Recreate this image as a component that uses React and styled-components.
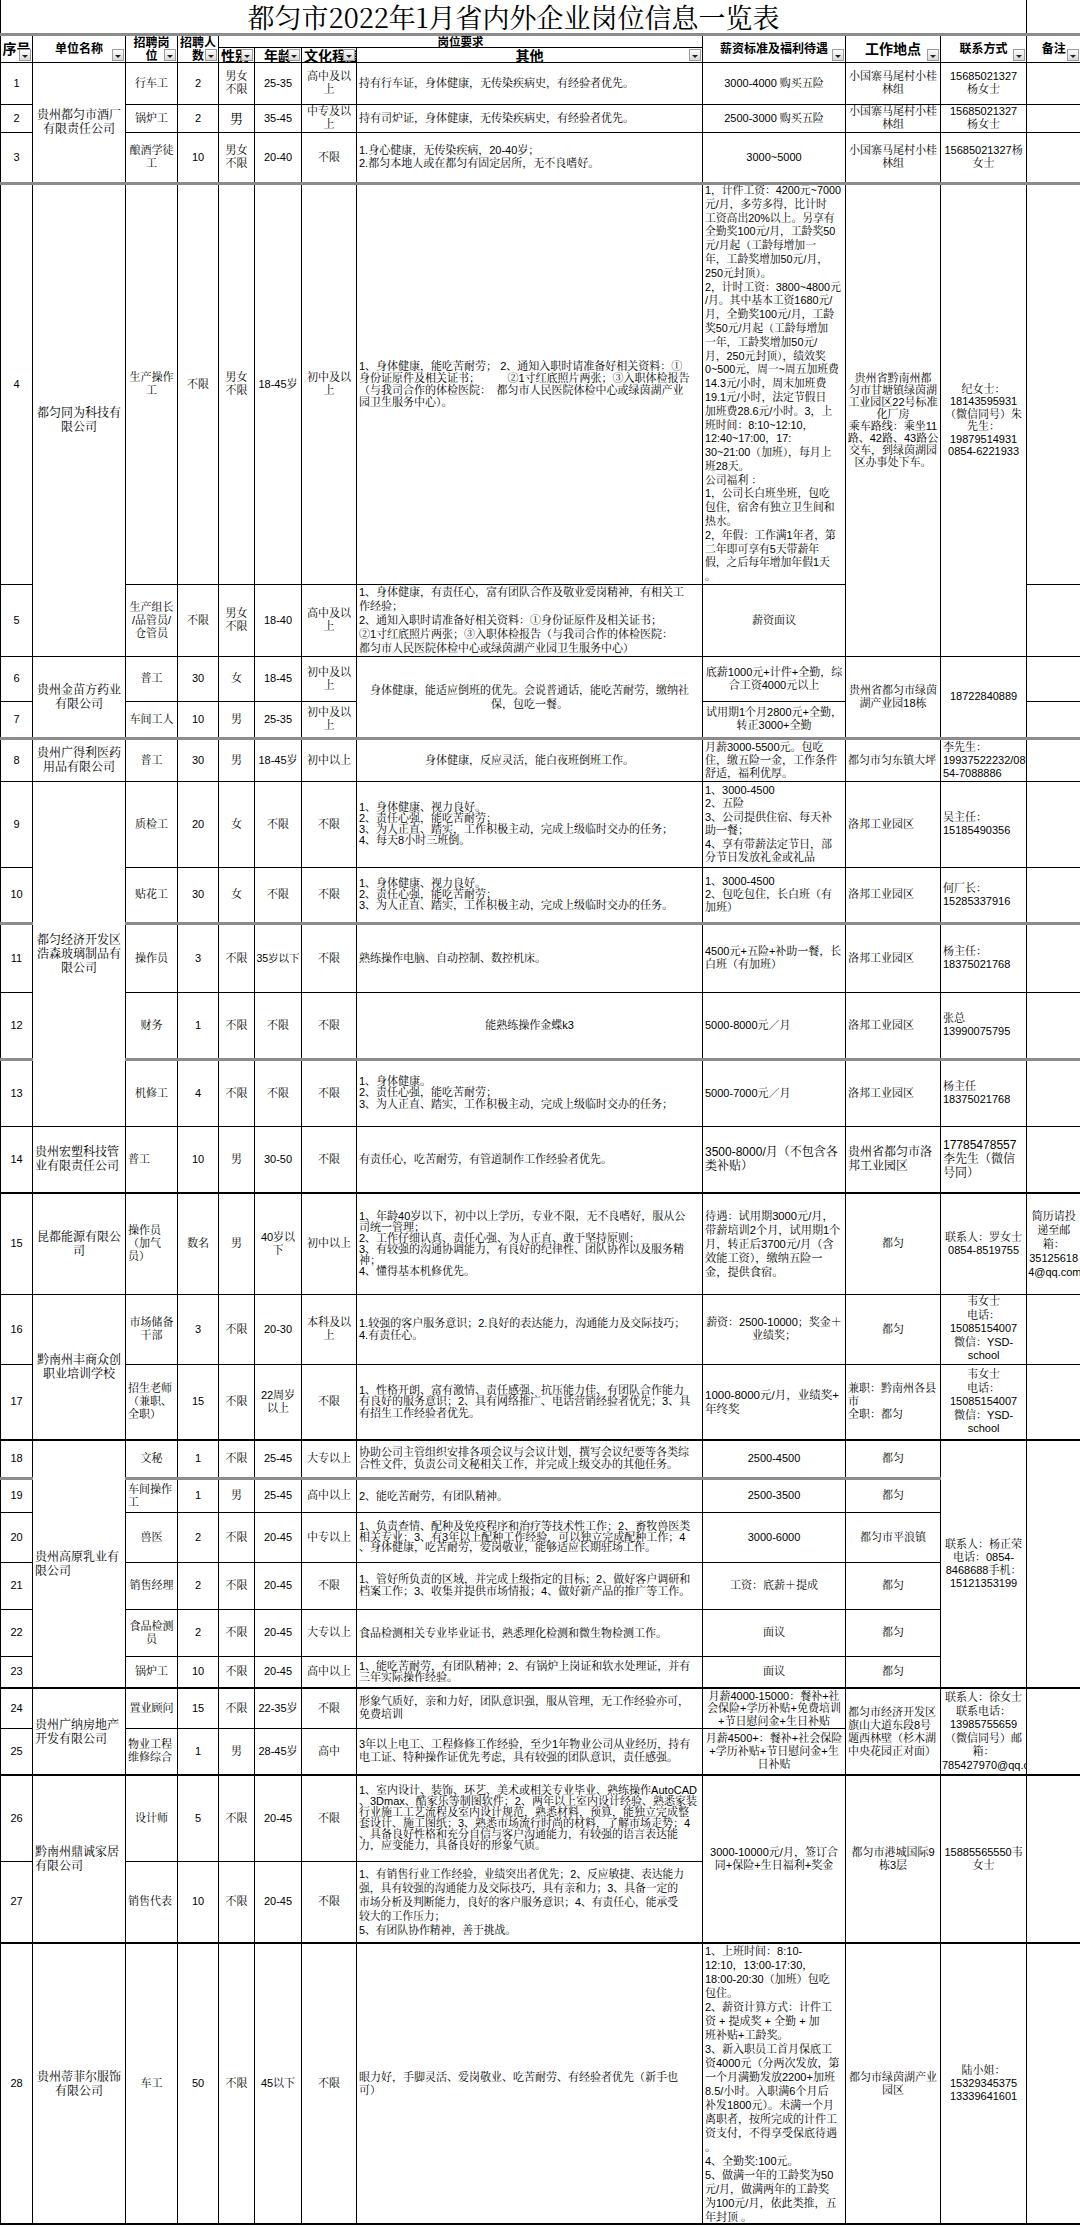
import React from "react";
import styled, { createGlobalStyle } from "styled-components";

const GlobalStyle = createGlobalStyle`
  html, body {
    margin: 0;
    padding: 0;
    background: #fff;
  }
  body {
    font-family: "Liberation Sans", "Noto Serif CJK SC", "Noto Sans CJK SC", sans-serif;
    color: #000;
  }
`;

// column widths, px
const COLS = [32, 93, 52, 41, 36, 47, 55, 346, 143, 95, 86, 54];
const EDGE_W = { gray: 3, bold: 2 };
const EDGE = { gray: "3px solid #8c8c8c", bold: "2px solid #000" };

const Sheet = styled.table`
  width: 1080px;
  border-collapse: collapse;
  table-layout: fixed;
  font-size: 11px;
`;

const Col = styled.col`
  width: ${(p) => p.$w}px;
`;

const TitleCell = styled.td`
  padding: 0;
  border-left: 1px solid #000;
  border-right: 1px solid #000;
  border-bottom: 3px solid #8c8c8c;
`;

const TitleText = styled.div`
  height: 32.5px;
  display: flex;
  align-items: center;
  justify-content: center;
  font-family: "Noto Serif CJK SC", "Noto Sans CJK SC", serif;
  font-size: 27px;
  white-space: nowrap;
`;

const HeadCell = styled.td`
  padding: 0;
  border: 1px solid #000;
`;

const HeadBox = styled.div`
  position: relative;
  height: ${(p) => p.$h}px;
  overflow: hidden;
  display: flex;
  align-items: center;
  justify-content: ${(p) => (p.$left ? "flex-start" : "center")};
  padding: 0 2px;
  font-family: "Noto Sans CJK SC", sans-serif;
  font-weight: 700;
  font-size: ${(p) => p.$fs || 12}px;
  line-height: ${(p) => p.$lh || 12.5}px;
  white-space: pre;
  text-align: center;
`;

const FilterBtn = styled.span`
  position: absolute;
  right: 1px;
  bottom: 1px;
  width: 12px;
  height: 12px;
  box-sizing: border-box;
  border: 1px solid #9c9c9c;
  background: linear-gradient(#fdfdfd, #d8d8d8);

  &::after {
    content: "";
    position: absolute;
    left: 2px;
    top: 5px;
    border-left: 3px solid transparent;
    border-right: 3px solid transparent;
    border-top: 3px solid #222;
  }
`;

const Cell = styled.td`
  padding: 0;
  border: 1px solid #000;
  border-bottom: ${(p) => EDGE[p.$edge] || "1px solid #000"};
  vertical-align: middle;
`;

const CellText = styled.div`
  height: ${(p) => p.$h}px;
  box-sizing: border-box;
  padding: ${(p) => (p.$align === "l" ? "0 0 0 2px" : "0 1px")};
  overflow: hidden;
  display: flex;
  flex-direction: column;
  justify-content: center;
  text-align: ${(p) => (p.$align === "l" ? "left" : "center")};
  font-size: ${(p) => p.$fs}px;
  line-height: ${(p) => p.$lh}px;
  white-space: ${(p) => (p.$pre ? "pre" : "pre-wrap")};
  word-break: break-all;
`;

const c = (t, o = {}) => ({ t, a: "c", rs: 1, fs: 11, lh: 13, ...o });
const co = (t, o = {}) => c(t, { fs: 12, lh: 14, ...o });
const ot = (t, o = {}) => c(t, { a: "l", lh: 12, ...o });

const HEAD_TOP = [
  { t: "序号", fs: 14 },
  { t: "单位名称" },
  { t: "招聘岗\n位" },
  { t: "招聘人\n数" },
  { t: "岗位要求", span: 4 },
  { t: "薪资标准及福利待遇" },
  { t: "工作地点", fs: 14 },
  { t: "联系方式" },
  { t: "备注" },
];
const HEAD_SUB = [
  { t: "性别", left: true },
  { t: "年龄" },
  { t: "文化程度", left: true },
  { t: "其他" },
];

const ROW4_OTHER =
  "1、身体健康，能吃苦耐劳； 2、通知入职时请准备好相关资料：①\n身份证原件及相关证书；　　　②1寸红底照片两张；③入职体检报告\n（与我司合作的体检医院：　都匀市人民医院体检中心或绿茵湖产业\n园卫生服务中心）。";
const ROW4_SAL =
  "1，计件工资：4200元~7000\n元/月，多劳多得，比计时\n工资高出20%以上。另享有\n全勤奖100元/月，工龄奖50\n元/月起（工龄每增加一\n年，工龄奖增加50元/月，\n250元封顶）。\n2，计时工资：3800~4800元\n/月。其中基本工资1680元/\n月，全勤奖100元/月，工龄\n奖50元/月起（工龄每增加\n一年，工龄奖增加50元/\n月，250元封顶），绩效奖\n0~500元，周一~周五加班费\n14.3元/小时，周末加班费\n19.1元/小时，法定节假日\n加班费28.6元/小时。3，上\n班时间：8:10~12:10，\n12:40~17:00，17:\n30~21:00（加班），每月上\n班28天。\n公司福利 ：\n1，公司长白班坐班，包吃\n包住，宿舍有独立卫生间和\n热水。\n2，年假：工作满1年者，第\n二年即可享有5天带薪年\n假，之后每年增加年假1天\n。";
const ROW4_LOC =
  "贵州省黔南州都\n匀市甘塘镇绿茵湖\n工业园区22号标准\n化厂房\n乘车路线：乘坐11\n路、42路、43路公\n交车，到绿茵湖园\n区办事处下车。";
const ROW4_CON =
  "纪女士：\n18143595931\n（微信同号）朱\n先生：\n19879514931\n0854-6221933";
const ROW5_OTHER =
  "1、身体健康，有责任心，富有团队合作及敬业爱岗精神，有相关工\n作经验；\n2、通知入职时请准备好相关资料：①身份证原件及相关证书；\n②1寸红底照片两张；③入职体检报告（与我司合作的体检医院：\n都匀市人民医院体检中心或绿茵湖产业园卫生服务中心）";
const ROW15_OTHER =
  "1、年龄40岁以下，初中以上学历，专业不限，无不良嗜好，服从公\n司统一管理；\n2、工作仔细认真、责任心强、为人正直、敢于坚持原则；\n3、有较强的沟通协调能力，有良好的纪律性、团队协作以及服务精\n神；\n4、懂得基本机修优先。";
const ROW15_SAL =
  "待遇：试用期3000元/月，\n带薪培训2个月，试用期1个\n月，转正后3700元/月（含\n效能工资），缴纳五险一\n金，提供食宿。";
const WEI = "韦女士\n电话：\n15085154007\n微信：YSD-\nschool";
const ROW26_OTHER =
  "1、室内设计、装饰、环艺、美术或相关专业毕业、熟练操作AutoCAD\n、3Dmax、酷家乐等制图软件；2、两年以上室内设计经验、熟悉家装\n行业施工工艺流程及室内设计规范，熟悉材料，预算，能独立完成整\n套设计、施工图纸；3、熟悉市场流行时尚的材料，了解市场走势；4\n、具备良好性格和充分自信与客户沟通能力，有较强的语言表达能\n力，应变能力，具备良好的形象气质。";
const ROW27_OTHER =
  "1、有销售行业工作经验，业绩突出者优先；2、反应敏捷、表达能力\n强，具有较强的沟通能力及交际技巧，具有亲和力；3、具备一定的\n市场分析及判断能力，良好的客户服务意识；4、有责任心，能承受\n较大的工作压力；\n5、有团队协作精神，善于挑战。";
const ROW28_SAL =
  "1、上班时间：8:10-\n12:10，13:00-17:30，\n18:00-20:30（加班）包吃\n包住。\n2、薪资计算方式：计件工\n资 + 提成奖 + 全勤 + 加\n班补贴+工龄奖。\n3、新入职员工首月保底工\n资4000元（分两次发放，第\n一个月满勤发放2200+加班\n8.5/小时。入职满6个月后\n补发1800元）。未满一个月\n离职者，按所完成的计件工\n资支付，不得享受保底待遇\n。\n4、全勤奖:100元。\n5、做满一年的工龄奖为50\n元/月，做满两年的工龄奖\n为100元/月，依此类推，五\n年封顶 。";

const ROWS = [
  { h: 42, cells: [c("1"), co("贵州都匀市酒厂\n有限责任公司", { rs: 3 }), c("行车工"), c("2"), c("男女\n不限"), c("25-35"), c("高中及以\n上"), ot("持有行车证，身体健康，无传染疾病史，有经验者优先。"), c("3000-4000 购买五险"), c("小国寨马尾村小桂\n林组"), c("15685021327\n杨女士"), c("")] },
  { h: 28, cells: [c("2"), c("锅炉工"), c("2"), c("男", { fs: 13 }), c("35-45"), c("中专及以\n上"), ot("持有司炉证，身体健康，无传染疾病史，有经验者优先。"), c("2500-3000 购买五险"), c("小国寨马尾村小桂\n林组"), c("15685021327\n杨女士"), c("")] },
  { h: 51, edge: "gray", cells: [c("3"), c("酿酒学徒\n工"), c("10"), c("男女\n不限"), c("20-40"), c("不限"), ot("1.身心健康，无传染疾病，20-40岁；\n2.都匀本地人或在都匀有固定居所，无不良嗜好。", { lh: 13 }), c("3000~5000"), c("小国寨马尾村小桂\n林组"), c("15685021327杨\n女士"), c("")] },
  { h: 401, cells: [c("4"), co("都匀同为科技有\n限公司", { rs: 2 }), c("生产操作\n工"), c("不限"), c("男女\n不限"), c("18-45岁"), c("初中及以\n上"), ot(ROW4_OTHER), c(ROW4_SAL, { a: "l", fs: 10.8, lh: 13.8 }), c(ROW4_LOC, { rs: 2, lh: 12 }), c(ROW4_CON, { rs: 2, lh: 12.5 }), c("")] },
  { h: 72, cells: [c("5"), c("生产组长\n/品管员/\n仓管员"), c("不限"), c("男女\n不限"), c("18-40"), c("高中及以\n上"), ot(ROW5_OTHER, { lh: 14 }), c("薪资面议"), c("")] },
  { h: 45, cells: [c("6"), co("贵州金苗方药业\n有限公司", { rs: 2 }), c("普工"), c("30"), c("女"), c("18-45"), c("初中及以\n上"), c("身体健康，能适应倒班的优先。会说普通话，能吃苦耐劳，缴纳社\n保，包吃一餐。", { rs: 2, lh: 14 }), c("底薪1000元+计件+全勤，综\n合工资4000元以上"), c("贵州省都匀市绿茵\n湖产业园18栋", { rs: 2 }), c("18722840889", { rs: 2 }), c("")] },
  { h: 37, edge: "gray", cells: [c("7"), c("车间工人"), c("10"), c("男"), c("25-35"), c("初中及以\n上"), c("试用期1个月2800元+全勤，\n转正3000+全勤"), c("")] },
  { h: 43, cells: [c("8"), co("贵州广得利医药\n用品有限公司"), c("普工"), c("30"), c("男"), c("18-45岁"), c("初中以上"), c("身体健康，反应灵活，能白夜班倒班工作。"), c("月薪3000-5500元。包吃\n住，缴五险一金，工作条件\n舒适，福利优厚。", { a: "l" }), c("都匀市匀东镇大坪", { a: "l" }), c("李先生：\n19937522232/08\n54-7088886", { a: "l" }), c("")] },
  { h: 86, cells: [c("9"), co("都匀经济开发区\n浩森玻璃制品有\n限公司", { rs: 5 }), c("质检工"), c("20"), c("女"), c("不限"), c("不限"), ot("1、身体健康、视力良好。\n2、责任心强，能吃苦耐劳；\n3、为人正直、踏实，工作积极主动，完成上级临时交办的任务；\n4、每天8小时三班倒。", { lh: 11 }), c("1、3000-4500\n2、五险\n3、公司提供住宿、每天补\n助一餐；\n4、享有带薪法定节日，部\n分节日发放礼金或礼品", { a: "l", lh: 13.5 }), c("洛邦工业园区", { a: "l" }), c("吴主任：\n15185490356", { a: "l" }), c("")] },
  { h: 56, edge: "gray", cells: [c("10"), c("贴花工"), c("30"), c("女"), c("不限"), c("不限"), ot("1、身体健康、视力良好。\n2、责任心强，能吃苦耐劳；\n3、为人正直、踏实，工作积极主动，完成上级临时交办的任务。", { lh: 11 }), c("1、3000-4500\n2、包吃包住，长白班（有\n加班）", { a: "l" }), c("洛邦工业园区", { a: "l" }), c("何厂长：\n15285337916", { a: "l" }), c("")] },
  { h: 69, cells: [c("11"), c("操作员"), c("3"), c("不限"), c("35岁以下", { fs: 10.5 }), c("不限"), ot("熟练操作电脑、自动控制、数控机床。"), c("4500元+五险+补助一餐，长\n白班（有加班）", { a: "l" }), c("洛邦工业园区", { a: "l" }), c("杨主任：\n18375021768", { a: "l" }), c("")] },
  { h: 67, edge: "gray", cells: [c("12"), c("财务"), c("1"), c("不限"), c("不限"), c("不限"), c("能熟练操作金蝶k3"), c("5000-8000元／月", { a: "l" }), c("洛邦工业园区", { a: "l" }), c("张总\n13990075795", { a: "l" }), c("")] },
  { h: 67, cells: [c("13"), c("机修工"), c("4"), c("不限"), c("不限"), c("不限"), ot("1、身体健康。\n2、责任心强，能吃苦耐劳；\n3、为人正直、踏实，工作积极主动，完成上级临时交办的任务；", { lh: 11.5 }), c("5000-7000元／月", { a: "l" }), c("洛邦工业园区", { a: "l" }), c("杨主任\n18375021768", { a: "l" }), c("")] },
  { h: 67, edge: "bold", cells: [c("14"), co("贵州宏塑科技管\n业有限责任公司", { a: "l" }), c("普工", { a: "l" }), c("10"), c("男"), c("30-50"), c("不限"), ot("有责任心，吃苦耐劳，有管道制作工作经验者优先。"), c("3500-8000/月（不包含各\n类补贴）", { a: "l", fs: 12, lh: 14 }), c("贵州省都匀市洛\n邦工业园区", { a: "l", fs: 12, lh: 14 }), c("17785478557\n李先生（微信\n号同）", { a: "l", fs: 12, lh: 14 }), c("")] },
  { h: 101, cells: [c("15"), co("昆都能源有限公\n司"), c("操作员\n（加气\n员）", { a: "l" }), c("数名"), c("男"), c("40岁以\n下"), c("初中以上"), ot(ROW15_OTHER, { lh: 11 }), c(ROW15_SAL, { a: "l", fs: 11.2, lh: 14 }), c("都匀"), c("联系人：罗女士\n0854-8519755"), c("简历请投\n递至邮\n箱：\n35125618\n4@qq.com", { lh: 14 })] },
  { h: 70, cells: [c("16"), co("黔南州丰商众创\n职业培训学校", { rs: 2 }), c("市场储备\n干部"), c("3"), c("不限"), c("20-30"), c("本科及以\n上"), ot("1.较强的客户服务意识；2.良好的表达能力，沟通能力及交际技巧；\n4.有责任心。"), c("薪资：2500-10000；奖金＋\n业绩奖；"), c("都匀"), c(WEI, { lh: 13.5 }), c("")] },
  { h: 76, edge: "bold", cells: [c("17"), c("招生老师\n（兼职、\n全职）", { a: "l" }), c("15"), c("不限"), c("22周岁\n以上"), c("不限"), ot("1、性格开朗、富有激情、责任感强、抗压能力佳、有团队合作能力\n有良好的服务意识；2、具有网络推广、电话营销经验者优先；3、具\n有招生工作经验者优先。", { lh: 11.5 }), c("1000-8000元/月，业绩奖+\n年终奖", { a: "l", fs: 11.5, lh: 14 }), c("兼职：黔南州各县\n市\n全职：都匀", { a: "l" }), c(WEI, { lh: 13.5 }), c("")] },
  { h: 38, edge: "gray", cells: [c("18"), co("贵州高原乳业有\n限公司", { rs: 6, a: "l" }), c("文秘"), c("1"), c("不限"), c("25-45"), c("大专以上"), ot("协助公司主管组织安排各项会议与会议计划，撰写会议纪要等各类综\n合性文件，负责公司文秘相关工作，并完成上级交办的其他任务。", { lh: 11.5 }), c("2500-4500"), c("都匀"), c("联系人：杨正荣\n电话：0854-\n8468688手机：\n15121353199", { rs: 6 }), c("", { rs: 6 })] },
  { h: 34, cells: [c("19"), c("车间操作\n工", { a: "l" }), c("1"), c("男"), c("25-45"), c("高中以上"), ot("2、能吃苦耐劳，有团队精神。"), c("2500-3500"), c("都匀")] },
  { h: 50, cells: [c("20"), c("兽医"), c("2"), c("不限"), c("20-45"), c("中专以上"), ot("1、负责查情、配种及免疫程序和治疗等技术性工作；2、畜牧兽医类\n相关专业；3、有3年以上配种工作经验，可以独立完成配种工作；4\n、身体健康，吃苦耐劳，爱岗敬业，能够适应长期驻场工作。", { lh: 10.5 }), c("3000-6000"), c("都匀市平浪镇")] },
  { h: 47, cells: [c("21"), c("销售经理"), c("2"), c("不限"), c("20-45"), c("不限"), ot("1、管好所负责的区域，并完成上级指定的目标；2、做好客户调研和\n档案工作；3、收集并提供市场情报；4、做好新产品的推广等工作。", { lh: 11.5 }), c("工资：底薪＋提成"), c("都匀")] },
  { h: 47, cells: [c("22"), c("食品检测\n员"), c("2"), c("不限"), c("20-45"), c("大专以上"), ot("食品检测相关专业毕业证书，熟悉理化检测和微生物检测工作。"), c("面议"), c("都匀")] },
  { h: 32, edge: "bold", cells: [c("23"), c("锅炉工"), c("10"), c("不限"), c("20-45"), c("高中以上"), ot("1、能吃苦耐劳，有团队精神；2、有锅炉上岗证和软水处理证，并有\n三年实际操作经验。", { lh: 11 }), c("面议"), c("都匀")] },
  { h: 40, cells: [c("24"), co("贵州广纳房地产\n开发有限公司", { rs: 2, a: "l" }), c("置业顾问"), c("15"), c("不限"), c("22-35岁"), c("不限"), ot("形象气质好，亲和力好，团队意识强，服从管理，无工作经验亦可，\n免费培训", { lh: 13 }), c("月薪4000-15000：餐补+社\n会保险+学历补贴+免费培训\n+节日慰问金+生日补贴", { lh: 12.5 }), c("都匀市经济开发区\n旗山大道东段8号\n题西林壁（杉木湖\n中央花园正对面）", { rs: 2, a: "l" }), c("联系人：徐女士\n联系电话：\n13985755659\n（微信同号）邮\n箱：\n785427970@qq.c", { rs: 2, lh: 13.5 }), c("", { rs: 2 })] },
  { h: 47, edge: "bold", cells: [c("25"), c("物业工程\n维修综合", { a: "l" }), c("1"), c("男"), c("28-45岁"), c("高中"), ot("3年以上电工、工程修修工作经验，至少1年物业公司从业经历，持有\n电工证、特种操作证优先考虑，具有较强的团队意识，责任感强。", { lh: 13 }), c("月薪4500+：餐补+社会保险\n+学历补贴+节日慰问金+生\n日补贴")] },
  { h: 86, cells: [c("26"), co("黔南州鼎诚家居\n有限公司", { rs: 2, a: "l" }), c("设计师"), c("5"), c("不限"), c("20-45"), c("不限"), ot(ROW26_OTHER, { lh: 11 }), c("3000-10000元/月，签订合\n同+保险+生日福利+奖金", { rs: 2 }), c("都匀市港城国际9\n栋3层", { rs: 2 }), c("15885565550韦\n女士", { rs: 2 }), c("", { rs: 2 })] },
  { h: 82, edge: "bold", cells: [c("27"), c("销售代表", { a: "l" }), c("10"), c("不限"), c("20-45"), c("不限"), ot(ROW27_OTHER, { fs: 10.8, lh: 14 })] },
  { h: 281, edge: "bold", cells: [c("28"), co("贵州蒂菲尔服饰\n有限公司"), c("车工"), c("50"), c("不限"), c("45以下"), c("不限"), ot("眼力好，手脚灵活、爱岗敬业、吃苦耐劳、有经验者优先（新手也\n可）", { lh: 13 }), c(ROW28_SAL, { a: "l", lh: 14 }), c("都匀市绿茵湖产业\n园区"), c("陆小姐：\n15329345375\n13339641601"), c("")] },
];

// inner height of a cell starting at row i spanning `span` rows
const innerHeight = (i, span) => {
  let pitch = 0;
  for (let k = i; k < i + span; k++) pitch += ROWS[k].h;
  const top = i === 0 ? 1 : EDGE_W[ROWS[i - 1].edge] || 1;
  const bottom = EDGE_W[ROWS[i + span - 1].edge] || 1;
  return pitch - top / 2 - bottom / 2;
};

export default function App() {
  return (
    <>
      <GlobalStyle />
      <Sheet>
        <colgroup>
          {COLS.map((w, i) => (
            <Col key={i} $w={w} />
          ))}
        </colgroup>
        <tbody>
          <tr>
            <TitleCell colSpan={11}>
              <TitleText>都匀市2022年1月省内外企业岗位信息一览表</TitleText>
            </TitleCell>
            <TitleCell />
          </tr>
          <tr>
            {HEAD_TOP.map((hd) =>
              hd.span ? (
                <HeadCell key={hd.t} colSpan={hd.span}>
                  <HeadBox $h={11} $fs={11.5} $lh={11}>
                    {hd.t}
                  </HeadBox>
                </HeadCell>
              ) : (
                <HeadCell key={hd.t} rowSpan={2}>
                  <HeadBox $h={26} $fs={hd.fs}>
                    {hd.t}
                    <FilterBtn />
                  </HeadBox>
                </HeadCell>
              )
            )}
          </tr>
          <tr>
            {HEAD_SUB.map((hd) => (
              <HeadCell key={hd.t}>
                <HeadBox $h={14} $fs={14} $lh={14} $left={hd.left}>
                  {hd.t}
                  <FilterBtn />
                </HeadBox>
              </HeadCell>
            ))}
          </tr>
          {ROWS.map((row, i) => (
            <tr key={i}>
              {row.cells.map((cl, j) => {
                const edge = ROWS[i + cl.rs - 1].edge;
                return (
                  <Cell key={j} rowSpan={cl.rs} $edge={edge}>
                    <CellText
                      $h={innerHeight(i, cl.rs)}
                      $align={cl.a}
                      $fs={cl.fs}
                      $lh={cl.lh}
                      $pre={cl.t.includes("\n")}
                    >
                      {cl.t}
                    </CellText>
                  </Cell>
                );
              })}
            </tr>
          ))}
        </tbody>
      </Sheet>
    </>
  );
}
